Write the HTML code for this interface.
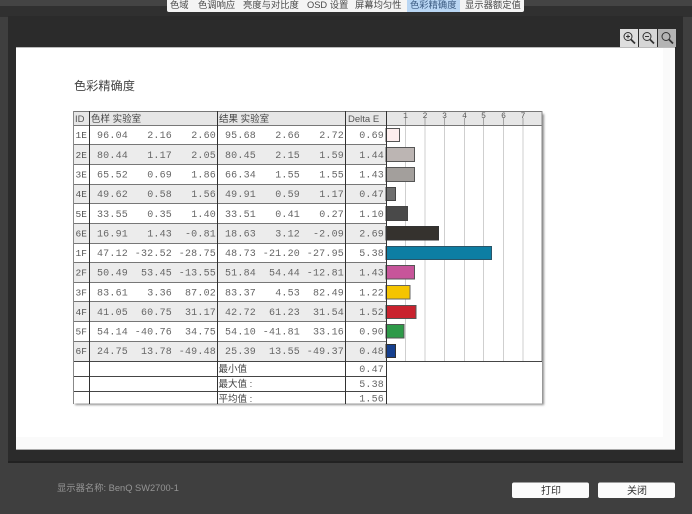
<!DOCTYPE html>
<html><head><meta charset="utf-8"><style>
html,body{margin:0;padding:0;background:#3f3f3f;width:692px;height:514px;overflow:hidden}
svg{display:block}
.m{font-family:"Liberation Mono",monospace;font-size:10px;fill:#666;letter-spacing:.2px;text-anchor:end}
.id{font-family:"Liberation Mono",monospace;font-size:9.5px;fill:#555}
.c{font-family:"Liberation Sans","Noto Sans CJK SC",sans-serif}
.tab{font-family:"Liberation Sans","Noto Sans CJK SC",sans-serif;font-size:9.3px;fill:#4a4a4a}
.tk{font-family:"Liberation Mono",monospace;font-size:8px;fill:#555;text-anchor:middle}
</style></head><body>
<svg width="692" height="514" viewBox="0 0 692 514" xmlns="http://www.w3.org/2000/svg">
<defs>
<filter id="b" x="0" y="0" width="100%" height="100%"><feGaussianBlur stdDeviation="0.38"/></filter>
<filter id="s" x="-5%" y="-5%" width="110%" height="110%"><feGaussianBlur stdDeviation="1"/></filter>
</defs>
<rect width="692" height="514" fill="#3f3f3f"/>
<rect x="0" y="0" width="692" height="6" fill="#444"/>
<rect x="0" y="6" width="692" height="11" fill="#303030"/>
<rect x="8" y="16" width="675" height="447" fill="#2b2b2b"/>
<rect x="8" y="461" width="675" height="2" fill="#222"/>

<rect x="16" y="48" width="659" height="402" fill="#fafafa"/>
<rect x="16" y="48" width="647" height="389" fill="#fff"/>
<rect x="16" y="47" width="659" height="1" fill="#bbb"/>
<rect x="16" y="449" width="659" height="1" fill="#aaa"/>

<rect x="75" y="114" width="469" height="291" fill="#8f8f8f" filter="url(#s)"/>

<g filter="url(#b)">
<rect x="167" y="-2" width="357" height="14" rx="2" fill="#f4f4f4"/>
<rect x="407" y="0" width="53" height="12" fill="#b9d6f4"/>
<text class="tab" y="8"><tspan x="170">色域</tspan><tspan x="198">色调响应</tspan><tspan x="243">亮度与对比度</tspan><tspan x="307">OSD 设置</tspan><tspan x="355">屏幕均匀性</tspan><tspan x="410" fill="#3a5a80">色彩精确度</tspan><tspan x="465">显示器额定值</tspan></text>

<rect x="620" y="29" width="18" height="18" fill="#dedede"/>
<rect x="639" y="29" width="18" height="18" fill="#d6d6d6"/>
<rect x="658" y="29" width="18" height="18" fill="#b4b4b4"/>
<g fill="none" stroke="#333" stroke-width="1">
<circle cx="628" cy="36.500" r="4"/><path d="M631 39.500L635 43.500" stroke-width="1.800"/><path d="M626 36.500h4M628 34.500v4"/>
<circle cx="647" cy="36.500" r="4"/><path d="M650 39.500L654 43.500" stroke-width="1.800"/><path d="M645 36.500h4"/>
<circle cx="666" cy="36.500" r="4"/><path d="M669 39.500L673 43.500" stroke-width="1.800"/>
</g>

<text class="c" x="74" y="90" font-size="12.200" fill="#444">色彩精确度</text>

<rect x="73.500" y="111.500" width="468.500" height="292" fill="#fff"/>
<rect x="73.500" y="111.500" width="468.500" height="14" fill="#e6e6e6"/>
<g fill="#ececec">
<rect x="74" y="145" width="312" height="19"/>
<rect x="74" y="184" width="312" height="20"/>
<rect x="74" y="223" width="312" height="20"/>
<rect x="74" y="263" width="312" height="19"/>
<rect x="74" y="302" width="312" height="19"/>
<rect x="74" y="341" width="312" height="20"/>
</g>
<path d="M405.500 125V361M425 125V361M444.500 125V361M464.500 125V361M483.500 125V361M503.500 125V361M523 125V361" stroke="#cfcfcf" stroke-width="1" fill="none"/>
<g stroke-width="1">
<rect x="386" y="128.500" width="13.500" height="13" fill="#fdeeee" stroke="#555"/>
<rect x="386" y="147.500" width="28.500" height="14" fill="#bcb5b3" stroke="#555"/>
<rect x="386" y="167.500" width="28.500" height="14" fill="#a39f9c" stroke="#555"/>
<rect x="386" y="187.500" width="9.500" height="13" fill="#6e6e6e" stroke="#444"/>
<rect x="386" y="206.500" width="21.500" height="14" fill="#4a4848" stroke="#444"/>
<rect x="386" y="226.500" width="52.500" height="13.500" fill="#35302f" stroke="#333"/>
<rect x="386" y="246.500" width="105.500" height="13" fill="#0e7ea3" stroke="#2b5568"/>
<rect x="386" y="265.500" width="28.500" height="13.500" fill="#c7559a" stroke="#555"/>
<rect x="386" y="285.500" width="24" height="13.500" fill="#f5c400" stroke="#666"/>
<rect x="386" y="305.500" width="30" height="13" fill="#c9202f" stroke="#555"/>
<rect x="386" y="324.500" width="18" height="13.500" fill="#2f9a4a" stroke="#555"/>
<rect x="386" y="344.500" width="9.500" height="13" fill="#12408f" stroke="#333"/>
</g>
<g stroke="#777" stroke-width="1" fill="none">
<path d="M74 111.500H542M74 125.500H542M74 144.500H386M74 164.500H386M74 184.500H386M74 203.500H386M74 223.500H386M74 243.500H386M74 262.500H386M74 282.500H386M74 301.500H386M74 321.500H386M74 341.500H386"/>
</g>
<path d="M74 361.500H542M74 376.500H386M74 391.500H386" stroke="#444" fill="none"/>
<path d="M73.500 111V404M542 111V361" stroke="#888" fill="none"/>
<path d="M89.500 111V404M217.500 111V404M345.500 111V404M386.500 111V404" stroke="#333" fill="none"/>
<path d="M405.500 118V125M425 118V125M444.500 118V125M464.500 118V125M483.500 118V125M503.500 118V125M523 118V125" stroke="#888" stroke-width=".7" fill="none"/>
<text class="tk" y="118"><tspan x="405.500">1</tspan><tspan x="425">2</tspan><tspan x="444.500">3</tspan><tspan x="464.500">4</tspan><tspan x="483.500">5</tspan><tspan x="503.500">6</tspan><tspan x="523">7</tspan></text>

<text class="c" font-size="9.500" fill="#555" y="122"><tspan x="75">ID</tspan><tspan x="348">Delta E</tspan></text>
<text class="c" font-size="9.500" fill="#444" y="122"><tspan x="91">色样 实验室</tspan><tspan x="219">结果 实验室</tspan></text>

<text class="id" y="138"><tspan x="75.500">1E</tspan></text>
<text class="id" y="158"><tspan x="75.500">2E</tspan></text>
<text class="id" y="177.500"><tspan x="75.500">3E</tspan></text>
<text class="id" y="197"><tspan x="75.500">4E</tspan></text>
<text class="id" y="217"><tspan x="75.500">5E</tspan></text>
<text class="id" y="236.500"><tspan x="75.500">6E</tspan></text>
<text class="id" y="256"><tspan x="75.500">1F</tspan></text>
<text class="id" y="275.500"><tspan x="75.500">2F</tspan></text>
<text class="id" y="295.500"><tspan x="75.500">3F</tspan></text>
<text class="id" y="315"><tspan x="75.500">4F</tspan></text>
<text class="id" y="334.500"><tspan x="75.500">5F</tspan></text>
<text class="id" y="354"><tspan x="75.500">6F</tspan></text>

<text class="m" y="138"><tspan x="128">96.04</tspan><tspan x="172">2.16</tspan><tspan x="216">2.60</tspan><tspan x="256">95.68</tspan><tspan x="300">2.66</tspan><tspan x="344">2.72</tspan><tspan x="384">0.69</tspan></text>
<text class="m" y="158"><tspan x="128">80.44</tspan><tspan x="172">1.17</tspan><tspan x="216">2.05</tspan><tspan x="256">80.45</tspan><tspan x="300">2.15</tspan><tspan x="344">1.59</tspan><tspan x="384">1.44</tspan></text>
<text class="m" y="177.500"><tspan x="128">65.52</tspan><tspan x="172">0.69</tspan><tspan x="216">1.86</tspan><tspan x="256">66.34</tspan><tspan x="300">1.55</tspan><tspan x="344">1.55</tspan><tspan x="384">1.43</tspan></text>
<text class="m" y="197"><tspan x="128">49.62</tspan><tspan x="172">0.58</tspan><tspan x="216">1.56</tspan><tspan x="256">49.91</tspan><tspan x="300">0.59</tspan><tspan x="344">1.17</tspan><tspan x="384">0.47</tspan></text>
<text class="m" y="217"><tspan x="128">33.55</tspan><tspan x="172">0.35</tspan><tspan x="216">1.40</tspan><tspan x="256">33.51</tspan><tspan x="300">0.41</tspan><tspan x="344">0.27</tspan><tspan x="384">1.10</tspan></text>
<text class="m" y="236.500"><tspan x="128">16.91</tspan><tspan x="172">1.43</tspan><tspan x="216">-0.81</tspan><tspan x="256">18.63</tspan><tspan x="300">3.12</tspan><tspan x="344">-2.09</tspan><tspan x="384">2.69</tspan></text>
<text class="m" y="256"><tspan x="128">47.12</tspan><tspan x="172">-32.52</tspan><tspan x="216">-28.75</tspan><tspan x="256">48.73</tspan><tspan x="300">-21.20</tspan><tspan x="344">-27.95</tspan><tspan x="384">5.38</tspan></text>
<text class="m" y="275.500"><tspan x="128">50.49</tspan><tspan x="172">53.45</tspan><tspan x="216">-13.55</tspan><tspan x="256">51.84</tspan><tspan x="300">54.44</tspan><tspan x="344">-12.81</tspan><tspan x="384">1.43</tspan></text>
<text class="m" y="295.500"><tspan x="128">83.61</tspan><tspan x="172">3.36</tspan><tspan x="216">87.02</tspan><tspan x="256">83.37</tspan><tspan x="300">4.53</tspan><tspan x="344">82.49</tspan><tspan x="384">1.22</tspan></text>
<text class="m" y="315"><tspan x="128">41.05</tspan><tspan x="172">60.75</tspan><tspan x="216">31.17</tspan><tspan x="256">42.72</tspan><tspan x="300">61.23</tspan><tspan x="344">31.54</tspan><tspan x="384">1.52</tspan></text>
<text class="m" y="334.500"><tspan x="128">54.14</tspan><tspan x="172">-40.76</tspan><tspan x="216">34.75</tspan><tspan x="256">54.10</tspan><tspan x="300">-41.81</tspan><tspan x="344">33.16</tspan><tspan x="384">0.90</tspan></text>
<text class="m" y="354"><tspan x="128">24.75</tspan><tspan x="172">13.78</tspan><tspan x="216">-49.48</tspan><tspan x="256">25.39</tspan><tspan x="300">13.55</tspan><tspan x="344">-49.37</tspan><tspan x="384">0.48</tspan></text>

<text class="c" font-size="9.500" fill="#444" x="218.500" y="372">最小值</text>
<text class="c" font-size="9.500" fill="#444" x="218.500" y="387">最大值 :</text>
<text class="c" font-size="9.500" fill="#444" x="218.500" y="402">平均值 :</text>
<text class="m" y="372"><tspan x="384">0.47</tspan></text>
<text class="m" y="387"><tspan x="384">5.38</tspan></text>
<text class="m" y="401.500"><tspan x="384">1.56</tspan></text>

<text class="c" x="57" y="491" font-size="9.300" fill="#949494">显示器名称: BenQ SW2700-1</text>
<rect x="512" y="482.500" width="77" height="15.500" rx="2" fill="#fbfbfb"/>
<rect x="598" y="482.500" width="77" height="15.500" rx="2" fill="#fbfbfb"/>
<text class="c" font-size="10" fill="#333" text-anchor="middle" y="494"><tspan x="551">打印</tspan><tspan x="637">关闭</tspan></text>
</g>
</svg>
</body></html>
